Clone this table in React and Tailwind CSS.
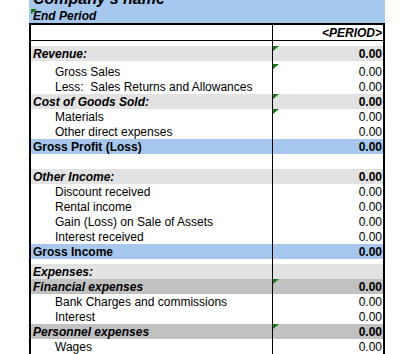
import React from "react";

const rows = [
  { type: "gap", h: "h-[5px]" },
  { label: "Revenue:", kind: "section", value: "0.00", mark: true },
  { type: "gap", h: "h-[3px]" },
  { label: "Gross Sales", kind: "item", value: "0.00", mark: true },
  { label: "Less:  Sales Returns and Allowances", kind: "item", value: "0.00" },
  { label: "Cost of Goods Sold:", kind: "section", value: "0.00", mark: true },
  { label: "Materials", kind: "item", value: "0.00", mark: true },
  { label: "Other direct expenses", kind: "item", value: "0.00" },
  { label: "Gross Profit (Loss)", kind: "total", value: "0.00" },
  { type: "gap", h: "h-[15px]" },
  { label: "Other Income:", kind: "section", value: "0.00" },
  { label: "Discount received", kind: "item", value: "0.00" },
  { label: "Rental income", kind: "item", value: "0.00" },
  { label: "Gain (Loss) on Sale of Assets", kind: "item", value: "0.00" },
  { label: "Interest received", kind: "item", value: "0.00" },
  { label: "Gross Income", kind: "total", value: "0.00" },
  { type: "gap", h: "h-[5px]" },
  { label: "Expenses:", kind: "section" },
  { label: "Financial expenses", kind: "group", value: "0.00", mark: true },
  { label: "Bank Charges and commissions", kind: "item", value: "0.00" },
  { label: "Interest", kind: "item", value: "0.00" },
  { label: "Personnel expenses", kind: "group", value: "0.00", mark: true },
  { label: "Wages", kind: "item", value: "0.00" },
];

const Mark = ({ className }) => (
  <svg
    className={`absolute ${className}`}
    width="6"
    height="5"
    viewBox="0 0 6 5"
  >
    <polygon points="0,0 6,0 0,5" fill="#137a13" />
  </svg>
);

const Row = ({ row }) => {
  if (row.type === "gap") {
    return (
      <div className={`grid grid-cols-[241px_1fr] ${row.h}`}>
        <div />
        <div className="border-l border-black" />
      </div>
    );
  }

  let bg = "bg-white";
  if (row.kind === "section") bg = "bg-[#e2e2e2]";
  if (row.kind === "group") bg = "bg-[#c1c1c1]";
  if (row.kind === "total") bg = "bg-[#a7c8ee]";

  let labelCls = "pl-[24px] font-normal";
  if (row.kind === "section" || row.kind === "group") labelCls = "pl-[2px] font-bold italic";
  if (row.kind === "total") labelCls = "pl-[2px] font-bold";

  const bold = row.kind !== "item";

  return (
    <div className={`grid grid-cols-[241px_1fr] h-[15px] leading-[17px] ${bg}`}>
      <div className={`whitespace-pre ${labelCls}`}>{row.label}</div>
      <div className={`relative border-l border-black pr-[1px] text-right ${bold ? "font-bold" : ""}`}>
        {row.mark && <Mark className="left-0 top-0" />}
        {row.value}
      </div>
    </div>
  );
};

export default function App() {
  return (
    <div
      className="w-[414px] h-[354px] overflow-hidden bg-white text-[12px] text-black"
      style={{ fontFamily: '"Liberation Sans", Arial, sans-serif' }}
    >
      <div className="ml-[29px] w-[356px]">
        <div className="relative h-[23px] overflow-hidden bg-[#a7c8ee] pl-[4px]">
          <div className="-mt-[9px] text-[16px] leading-[16px] font-bold italic whitespace-nowrap">
            Company's name
          </div>
          <div className="mt-[1px] leading-[17px] font-bold italic">End Period</div>
          <Mark className="left-[2px] top-[9px]" />
        </div>
        <div className="border-t-2 border-x-2 border-black">
          <div className="grid grid-cols-[241px_1fr] h-[16px] leading-[17px] border-b border-black">
            <div />
            <div className="border-l border-black pr-[1px] text-right font-bold italic">
              &lt;PERIOD&gt;
            </div>
          </div>
          {rows.map((row, i) => (
            <Row key={i} row={row} />
          ))}
        </div>
      </div>
    </div>
  );
}
